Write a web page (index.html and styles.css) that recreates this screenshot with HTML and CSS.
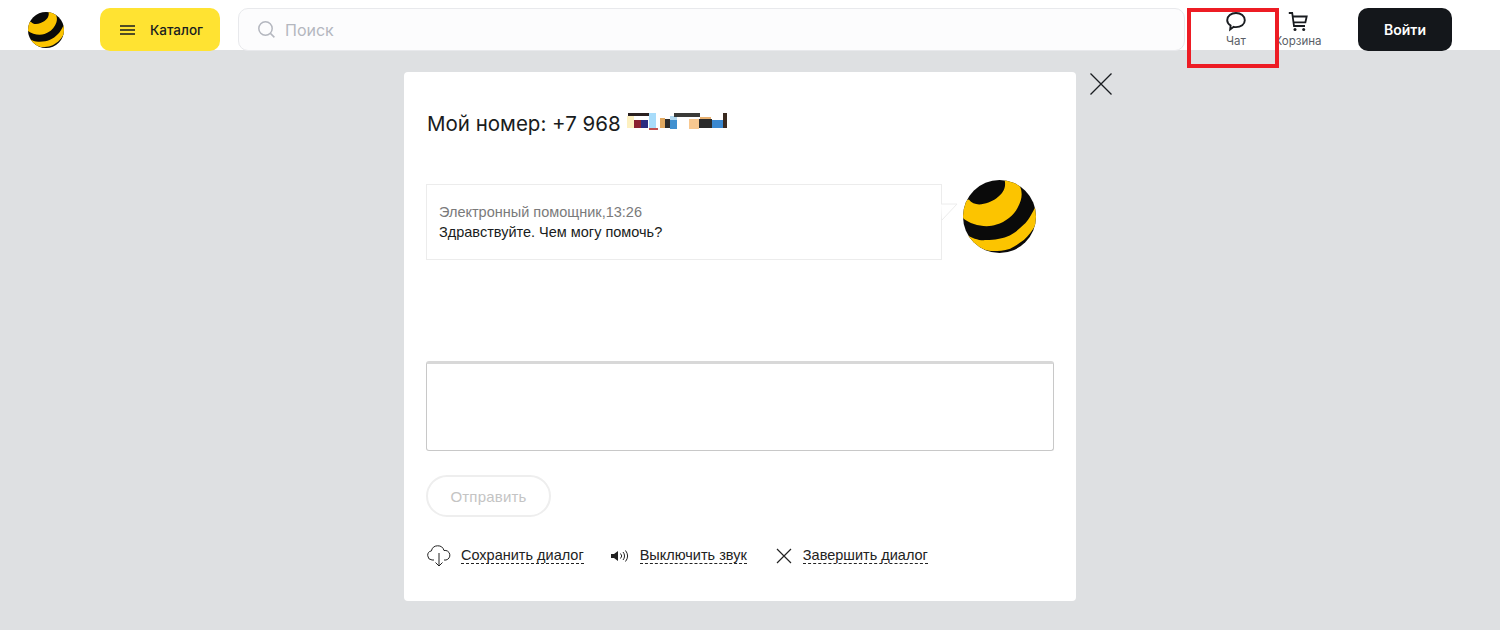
FILE: index.html
```html
<!DOCTYPE html>
<html lang="ru">
<head>
    <meta charset="UTF-8">
    <meta name="viewport" content="width=device-width, initial-scale=1.0">
    <title>Чат</title>
    <link rel="stylesheet" href="styles.css">
</head>
<body>
    <svg class="defs" width="0" height="0">
        <defs>
            <clipPath id="ball-clip"><circle cx="36" cy="36" r="36"/></clipPath>
            <symbol id="ball" viewBox="0 0 72 72">
                <g clip-path="url(#ball-clip)">
                    <rect width="72" height="72" fill="#0a0a0a"/>
                    <path fill="#fcc400" d="M-2 36C6 44 22 48 33 44C42 41 50 35 54 27C58 20 59 13 56.500 7L50-2L41 0C43 8 39 14 33 18C26 23 12 28 5.800 19.300L-2 22Z"/>
                    <path fill="#fcc400" d="M2 53C10 58 16 60 23 59.300C32 59 38 58 43 56C50 53 55 49 60 44C64 40 67 35 71 27L76 30L72 44C68 50 65 55 60 59.300C55 63 50 66 46.500 67.700C40 70 35 70 30 70C24 70 18 68 14.800 65.300L2 60Z"/>
                </g>
            </symbol>
        </defs>
    </svg>

    <header class="topbar">
        <svg class="logo" width="36" height="36"><use href="#ball"/></svg>
        <button class="catalog">
            <svg width="15" height="10" viewBox="0 0 15 10"><path d="M0 1h15M0 5h15M0 9h15" stroke="#191c20" stroke-width="1.5"/></svg>
            <span>Каталог</span>
        </button>
        <div class="search">
            <svg width="19" height="19" viewBox="0 0 19 19" fill="none" stroke="#b4b7bf" stroke-width="1.5"><circle cx="8.5" cy="8.5" r="6.7"/><path d="M13.4 13.4l4 4"/></svg>
            <span>Поиск</span>
        </div>
        <a class="tool tool-chat">
            <svg width="22" height="22" viewBox="0 0 22 22" fill="none" stroke="#191c20" stroke-width="1.9"><path d="M11 2c4.900 0 8.800 3.200 8.800 7.200s-3.900 6.900-8.800 6.900c-.8 0-1.600-.1-2.300-.3L5.200 18.500l.4-4C3.500 13.100 2.200 11.300 2.200 9.200 2.200 5.200 6.100 2 11 2Z"/></svg>
            <span>Чат</span>
        </a>
        <a class="tool tool-cart">
            <svg width="22" height="22" viewBox="0 0 22 22" fill="none" stroke="#191c20" stroke-width="1.8"><path d="M1.800 2h3.400l1.800 13h11M5.500 5.500h14.200l-1.300 5.800H6.300"/><circle cx="8" cy="18.600" r="1.500" fill="#191c20" stroke="none"/><circle cx="16.700" cy="18.600" r="1.500" fill="#191c20" stroke="none"/></svg>
            <span>Корзина</span>
        </a>
        <button class="login">Войти</button>
    </header>

    <div class="highlight"></div>

    <main class="chat-wrap">
        <section class="chat">
            <svg class="chat-close" width="24" height="24" viewBox="0 0 24 24"><path d="M1.500 1.500l21 21M22.500 1.500l-21 21" stroke="#191c20" stroke-width="1.300"/></svg>

            <h1 class="chat-title">
                Мой номер: +7 968
                <svg class="masked" width="100" height="20" viewBox="0 0 98 20" preserveAspectRatio="none" shape-rendering="crispEdges">
                    <rect x="0" y="3" width="7" height="12" fill="#fdf0c0"/>
                    <rect x="1" y="0" width="21" height="3" fill="#2a2020"/>
                    <rect x="7" y="7" width="7" height="8" fill="#8a2030"/>
                    <rect x="14" y="7" width="7" height="8" fill="#2a2a80"/>
                    <rect x="22" y="0" width="6" height="15" fill="#a8dcfa"/>
                    <rect x="22" y="15" width="8" height="2" fill="#c05050"/>
                    <rect x="32" y="5" width="5" height="10" fill="#e0a860"/>
                    <rect x="37" y="6" width="5" height="9" fill="#2a2a2a"/>
                    <rect x="42" y="3" width="7" height="4" fill="#b0d8f0"/>
                    <rect x="42" y="7" width="7" height="9" fill="#4090d0"/>
                    <rect x="46" y="0" width="26" height="4" fill="#3a3a38"/>
                    <rect x="72" y="4" width="10" height="2" fill="#e8b070"/>
                    <rect x="61" y="6" width="10" height="10" fill="#f8c890"/>
                    <rect x="71" y="6" width="12" height="9" fill="#2a2a2a"/>
                    <rect x="83" y="7" width="11" height="8" fill="#3a88d0"/>
                    <rect x="94" y="0" width="4" height="15" fill="#3a2a20"/>
                </svg>
            </h1>

            <div class="message">
                <div class="bubble">
                    <div class="bubble-meta">Электронный помощник,13:26</div>
                    <div>Здравствуйте. Чем могу помочь?</div>
                    <svg class="bubble-tail" width="18" height="19" viewBox="0 0 18 19"><path d="M0 1h16L1 17" fill="#fff" stroke="#ececec"/></svg>
                </div>
                <svg class="avatar" width="73" height="73"><use href="#ball"/></svg>
            </div>

            <textarea class="chat-input"></textarea>

            <button class="send" disabled>Отправить</button>

            <div class="actions">
                <div class="action">
                    <svg width="26" height="24" viewBox="0 0 26 24" fill="none" stroke="#222" stroke-width="1"><path d="M8 16H6a4.600 4.600 0 0 1-.6-9.100A6.500 6.500 0 0 1 18 6.500a4.800 4.800 0 0 1 2 9.500h-2"/><path d="M13 9v13M9.500 18.500L13 22l3.500-3.500"/></svg>
                    <a class="action-link">Сохранить диалог</a>
                </div>
                <div class="action">
                    <svg width="18" height="14" viewBox="0 0 18 14"><path d="M0 5h3l4-3v10L3 9H0Z" fill="#222"/><path d="M9.500 4.500a3.500 3.500 0 0 1 0 5M12 3a6 6 0 0 1 0 8M14.500 1.500a9 9 0 0 1 0 11" fill="none" stroke="#222"/></svg>
                    <a class="action-link">Выключить звук</a>
                </div>
                <div class="action">
                    <svg width="16" height="16" viewBox="0 0 16 16"><path d="M1 1l14 14M15 1L1 15" stroke="#222" stroke-width="1.200"/></svg>
                    <a class="action-link">Завершить диалог</a>
                </div>
            </div>
        </section>
    </main>
</body>
</html>
```

FILE: styles.css
```css
body {
    margin: 0;
    background-color: #dee0e2;
    color: #191c20;
    font-family: "Liberation Sans", Arial, sans-serif;
    font-size: 14.5px;
    overflow: hidden;
}

.defs {
    display: block;
}

.topbar {
    display: flex;
    align-items: flex-start;
    height: 42px;
    padding: 8px 48px 0 28px;
    background-color: #fff;
    font-family: Inter, sans-serif;
}

.logo {
    margin: 4px 36px 0 0;
}

.catalog {
    display: flex;
    align-items: center;
    gap: 15px;
    width: 120px;
    height: 43px;
    padding: 0 0 0 20px;
    border: none;
    border-radius: 10px;
    background-color: #ffe332;
    color: #191c20;
    font-family: Inter, sans-serif;
    font-size: 13.5px;
    font-weight: 500;
}

.search {
    display: flex;
    align-items: center;
    gap: 9px;
    box-sizing: border-box;
    width: 947px;
    height: 43px;
    margin-left: 18px;
    padding-left: 18px;
    border: 1px solid #e8e9ec;
    border-radius: 10px;
    background-color: #fcfcfd;
    color: #b4b7bf;
    font-size: 16px;
}

.tool {
    display: flex;
    flex-direction: column;
    align-items: center;
    width: 62px;
    margin-top: 3px;
    color: #5a5e66;
    font-size: 11.5px;
    line-height: 14px;
}

.tool span {
    margin-top: 1px;
}

.tool-chat {
    margin-left: 20px;
}

.login {
    width: 94px;
    height: 43px;
    margin-left: 29px;
    border: none;
    border-radius: 10px;
    background-color: #14171b;
    color: #fff;
    font-family: Inter, sans-serif;
    font-size: 14px;
    font-weight: 600;
}

/* red frame drawn over the screenshot */
.highlight {
    position: absolute;
    left: 1187px;
    top: 8px;
    width: 84px;
    height: 52px;
    border: 4px solid #ed1c24;
}

.chat-wrap {
    padding: 22px 0 0 404px;
}

.chat {
    position: relative;
    box-sizing: border-box;
    width: 672px;
    height: 529px;
    padding: 0 22px;
    border-radius: 4px;
    background-color: #fff;
}

.chat-close {
    position: absolute;
    left: 685px;
    top: 0;
}

.chat-title {
    display: flex;
    align-items: center;
    gap: 6px;
    margin: 0;
    padding: 37px 0 0 1px;
    height: 28px;
    font-family: Inter, sans-serif;
    font-size: 20.5px;
    font-weight: 400;
}

.message {
    display: flex;
    align-items: flex-start;
    margin-top: 47px;
}

.bubble {
    position: relative;
    box-sizing: border-box;
    width: 516px;
    height: 76px;
    padding: 17px 12px 0;
    border: 1px solid #ececec;
    line-height: 20px;
}

.bubble-meta {
    color: #7a7a7a;
}

.bubble-tail {
    position: absolute;
    left: 514px;
    top: 18px;
}

.avatar {
    margin: -4px 0 0 21px;
}

.chat-input {
    display: block;
    box-sizing: border-box;
    width: 628px;
    height: 90px;
    margin-top: 101px;
    border: 1px solid #c8c8c8;
    border-top: 3px solid #d8d8d8;
    border-radius: 3px;
    background-color: #fff;
    resize: none;
}

.send {
    display: block;
    width: 125px;
    height: 42px;
    margin-top: 24px;
    padding-left: 6px;
    border: 2px solid #eeeeee;
    border-radius: 21px;
    background-color: #fff;
    color: #c4c4c4;
    font-family: "Liberation Sans", Arial, sans-serif;
    font-size: 15px;
    letter-spacing: 0.2px;
}

.actions {
    display: flex;
    margin-top: 27px;
}

.action {
    display: flex;
    align-items: center;
    height: 24px;
}

.action:nth-child(1) svg {
    margin-right: 9px;
}

.action:nth-child(2) {
    margin-left: 27px;
}

.action:nth-child(2) svg {
    margin-right: 11px;
}

.action:nth-child(3) {
    margin-left: 29px;
}

.action:nth-child(3) svg {
    margin-right: 11px;
}

.action-link {
    border-bottom: 1px dashed #222;
    color: #222;
    line-height: 15px;
}
```
